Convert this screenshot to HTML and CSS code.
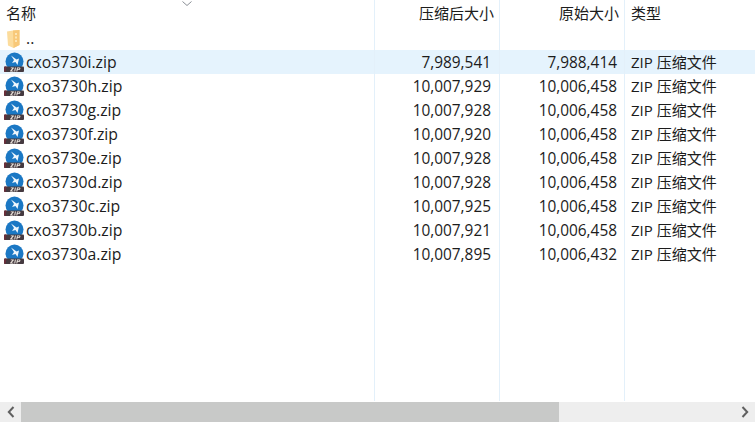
FILE: index.html
```html
<!DOCTYPE html>
<html lang="zh-CN">
<head>
<meta charset="utf-8">
<title>cxo3730</title>
<link rel="stylesheet" href="styles.css">
</head>
<body>
<svg class="defs" width="0" height="0" aria-hidden="true">
  <symbol id="zip" viewBox="0 0 20 20">
    <circle cx="10.500" cy="9.500" r="9" fill="#1b78c4"/>
    <path d="M7 3.500 12.500 7.500 15 6.500 13.500 13 11.500 10 8 11 10 8Z" fill="#eef6fc"/>
    <rect x="0" y="14.500" width="20" height="5.500" rx="1" fill="#453a40"/>
    <path d="M0 15.500q0-1 1-1h1.500l-1 5.500H1q-1 0-1-1Z" fill="#6a2f3a"/>
    <path d="M6.800 15.500h3.100l-.1.700-2.200 2.500h1.900l-.2.800H6.100l.1-.7 2.200-2.500H6.700ZM10.900 15.500h1l-.7 4h-1ZM13 15.500h2.300q1.300 0 1.100 1.300t-1.600 1.300h-1.200l-.3 1.400h-1Zm.8.800-.2 1h1q.7 0 .8-.5t-.5-.5Z" fill="#f4eee6"/>
  </symbol>
</svg>
<main class="window">
  <div class="rules" aria-hidden="true"><i></i><i></i><i></i></div>
  <header class="row head">
    <span class="name">名称</span>
    <span class="num">压缩后大小</span>
    <span class="num orig">原始大小</span>
    <span class="type">类型</span>
    <svg class="sort" width="10" height="5" viewBox="0 0 10 5"><path d="M.5.500 5 4.500 9.500.500" fill="none" stroke="#8a8f96"/></svg>
  </header>
  <section class="list">
    <div class="row">
      <span class="name"><svg class="icon folder" width="13" height="18" viewBox="0 0 13 18"><path d="M0 1.500 6 .5 12.500 0v15l-6 3L1 15.500Z" fill="#fcdc9c"/><path d="M6 .5 12.500 0v15l-6 3Z" fill="#f8c878"/><path d="M8 3h2v2H8Zm0 3.500h2v2H8Zm0 3.500h2v2H8Z" fill="#fde6b5"/></svg>..</span>
    </div>
    <div class="row selected"><span class="name"><svg class="icon zip" width="20" height="20"><use href="#zip"/></svg>cxo3730i.zip</span><span class="num val">7,989,541</span><span class="num val orig">7,988,414</span><span class="type">ZIP 压缩文件</span></div>
    <div class="row"><span class="name"><svg class="icon zip" width="20" height="20"><use href="#zip"/></svg>cxo3730h.zip</span><span class="num val">10,007,929</span><span class="num val orig">10,006,458</span><span class="type">ZIP 压缩文件</span></div>
    <div class="row"><span class="name"><svg class="icon zip" width="20" height="20"><use href="#zip"/></svg>cxo3730g.zip</span><span class="num val">10,007,928</span><span class="num val orig">10,006,458</span><span class="type">ZIP 压缩文件</span></div>
    <div class="row"><span class="name"><svg class="icon zip" width="20" height="20"><use href="#zip"/></svg>cxo3730f.zip</span><span class="num val">10,007,920</span><span class="num val orig">10,006,458</span><span class="type">ZIP 压缩文件</span></div>
    <div class="row"><span class="name"><svg class="icon zip" width="20" height="20"><use href="#zip"/></svg>cxo3730e.zip</span><span class="num val">10,007,928</span><span class="num val orig">10,006,458</span><span class="type">ZIP 压缩文件</span></div>
    <div class="row"><span class="name"><svg class="icon zip" width="20" height="20"><use href="#zip"/></svg>cxo3730d.zip</span><span class="num val">10,007,928</span><span class="num val orig">10,006,458</span><span class="type">ZIP 压缩文件</span></div>
    <div class="row"><span class="name"><svg class="icon zip" width="20" height="20"><use href="#zip"/></svg>cxo3730c.zip</span><span class="num val">10,007,925</span><span class="num val orig">10,006,458</span><span class="type">ZIP 压缩文件</span></div>
    <div class="row"><span class="name"><svg class="icon zip" width="20" height="20"><use href="#zip"/></svg>cxo3730b.zip</span><span class="num val">10,007,921</span><span class="num val orig">10,006,458</span><span class="type">ZIP 压缩文件</span></div>
    <div class="row"><span class="name"><svg class="icon zip" width="20" height="20"><use href="#zip"/></svg>cxo3730a.zip</span><span class="num val">10,007,895</span><span class="num val orig">10,006,432</span><span class="type">ZIP 压缩文件</span></div>
  </section>
  <footer class="scrollbar">
    <span class="arrow"><svg width="8" height="12" viewBox="0 0 8 12"><path d="M6.500 1 1.800 6l4.700 5" fill="none" stroke="#606060" stroke-width="2"/></svg></span>
    <div class="track"><div class="thumb"></div></div>
    <span class="arrow"><svg width="8" height="12" viewBox="0 0 8 12"><path d="M1.500 1 6.200 6l-4.700 5" fill="none" stroke="#606060" stroke-width="2"/></svg></span>
  </footer>
</main>
</body>
</html>
```
FILE: styles.css
```css
* { box-sizing: border-box; }
html, body { margin: 0; height: 100%; background: #fff; overflow: hidden; }
.defs { position: absolute; }
.window {
  position: relative;
  display: flex;
  flex-direction: column;
  height: 422px;
  width: 755px;
  font: 15px "Open Sans", "Noto Sans CJK SC", sans-serif;
  color: #1c1c1c;
}
.rules { position: absolute; inset: 0 0 21px 0; pointer-events: none; z-index: 2; }
.rules i { position: absolute; top: 0; bottom: 0; width: 1px; background: #e3f0fa; }
.rules i:nth-child(1) { left: 374px; }
.rules i:nth-child(2) { left: 499px; }
.rules i:nth-child(3) { left: 624px; }
.row {
  position: relative;
  display: grid;
  grid-template-columns: 375px 125px 125px 130px;
  grid-template-rows: 100%;
  align-items: center;
  height: 24px;
  white-space: nowrap;
  line-height: 24px;
}
.head { height: 26px; }
.selected { background: #e5f3fd; }
.list { flex: 1; }
.name { display: flex; align-items: center; padding-left: 6px; }
.row:not(.head) .name { padding-left: 26px; position: relative; font-size: 15.8px; }
.icon { position: absolute; left: 4px; top: 2px; }
.icon.folder { left: 7px; top: 4px; }
.num { text-align: right; padding-right: 6px; }
.val { padding: 2px 9px 0 0; font-size: 15.400px; }
.val.orig { padding-right: 8px; }
.type { padding-left: 6px; }
.sort { position: absolute; left: 182px; top: 1px; }
.scrollbar { display: flex; height: 20px; background: #eeeeee; }
.arrow { flex: 0 0 21px; display: flex; align-items: center; justify-content: center; }
.track { flex: 1; }
.thumb { width: 538px; height: 100%; background: #c8c9c8; }
```
